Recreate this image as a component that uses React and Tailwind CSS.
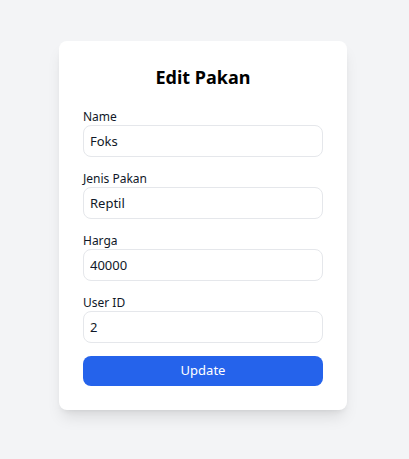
import React, { useState } from 'react';

const Field = ({ label, value, onChange }) => (
    <div className="flex flex-col">
        <label className="text-xs leading-4 text-gray-900">{label}</label>
        <input
            type="text"
            value={value}
            onChange={e => onChange(e.target.value)}
            className="h-8 w-full rounded-lg border border-[#e5e7eb] bg-white px-1.5 text-[13px] text-gray-900 outline-none"
        />
    </div>
);

const App = () => {
    const [name, setName] = useState('Foks');
    const [jenis, setJenis] = useState('Reptil');
    const [harga, setHarga] = useState('40000');
    const [userId, setUserId] = useState('2');

    return (
        <div className="min-h-screen bg-[#f3f4f6] pt-[41px] pl-[59px]" style={{ fontFamily: '"Noto Sans", sans-serif' }}>
            <div className="w-72 rounded-lg bg-white p-6 shadow-lg">
                <h2 className="mb-5 text-center text-lg leading-6 font-bold text-black">Edit Pakan</h2>
                <form className="flex flex-col gap-3.5" onSubmit={e => e.preventDefault()}>
                    <Field label="Name" value={name} onChange={setName} />
                    <Field label="Jenis Pakan" value={jenis} onChange={setJenis} />
                    <Field label="Harga" value={harga} onChange={setHarga} />
                    <Field label="User ID" value={userId} onChange={setUserId} />
                    <button type="submit" className="-mt-px h-[30px] w-full rounded-lg bg-[#2563eb] text-[13px] text-white">Update</button>
                </form>
            </div>
        </div>
    );
};

export default App;
